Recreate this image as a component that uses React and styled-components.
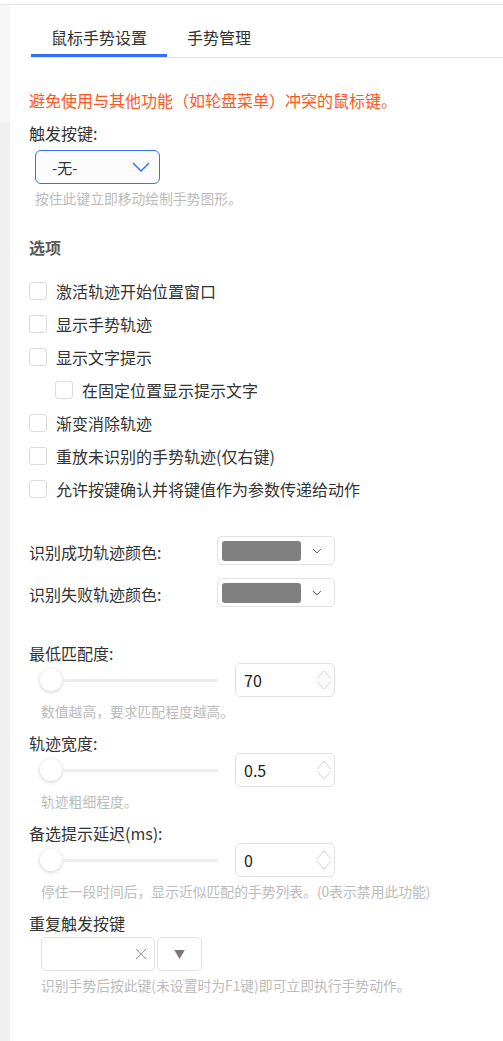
import React, { useState } from 'react';
import styled, { createGlobalStyle } from 'styled-components';

const GlobalStyle = createGlobalStyle`
  html, body {
    margin: 0;
    padding: 0;
    background: #fff;
  }
  body {
    font-family: "Noto Sans CJK SC", "Noto Sans", sans-serif;
    color: #333;
  }
`;

const Page = styled.div`
  height: 1041px;
  display: flex;
  flex-direction: column;
  padding-top: 4px;
  box-sizing: border-box;
`;

const Frame = styled.div`
  flex: 1;
  display: flex;
  border-top: 1px solid #e6e6e6;
`;

const Strip = styled.div`
  width: 10px;
  flex-shrink: 0;
  display: flex;
  flex-direction: column;
  background: #efefef;

  &::before {
    content: '';
    height: 117px;
    background: #f7f7f7;
  }
`;

const Main = styled.div`
  flex: 1;
  padding-left: 19px;
`;

const TabBar = styled.div`
  display: flex;
  border-bottom: 1px solid #e4e4e4;
`;

const Tab = styled.div`
  padding: 20px 20px 5px;
  margin-left: ${p => (p.$first ? '2px' : '0')};
  font-size: 16px;
  line-height: 24px;
  color: #333;
  border-bottom: 3px solid ${p => (p.$active ? '#3370ff' : 'transparent')};
  cursor: pointer;
`;

const Warning = styled.div`
  margin-top: 30px;
  font-size: 16px;
  line-height: 24px;
  color: #ff5722;
`;

const FieldLabel = styled.div`
  margin-top: ${p => p.$top || 0}px;
  font-size: 16px;
  line-height: ${p => p.$lh || 20}px;
  color: #333;
`;

const Help = styled.div`
  margin: 4px 0 0 ${p => p.$indent || 12}px;
  font-size: 13.8px;
  line-height: 20px;
  color: #bbb;
`;

const Select = styled.div`
  margin: 5px 0 0 6px;
  width: 125px;
  height: 34px;
  box-sizing: border-box;
  border: 1px solid #3370ff;
  border-radius: 6px;
  background: #fcfcfc;
  display: flex;
  align-items: center;
  justify-content: space-between;
  padding: 0 9px 0 16px;
  font-size: 15px;
  color: #333;
`;

const Section = styled.div`
  margin-top: 27px;
  font-size: 16px;
  line-height: 24px;
  font-weight: bold;
  color: #5a5a5a;
`;

const Options = styled.div`
  margin-top: 15px;
`;

const CheckRow = styled.label`
  height: 33px;
  display: flex;
  align-items: center;
  gap: 9px;
  padding-left: ${p => (p.$nested ? 26 : 0)}px;
  font-size: 16px;
  color: #333;
  cursor: pointer;
`;

const Box = styled.span`
  width: 18px;
  height: 18px;
  box-sizing: border-box;
  border: 1px solid #dcdcdc;
  border-radius: 3px;
  background: ${p => (p.$on ? '#3370ff' : '#fff')};
`;

const ColorRows = styled.div`
  margin-top: 31px;
  display: flex;
  flex-direction: column;
  gap: 13px;
`;

const ColorRow = styled.div`
  display: flex;
  align-items: center;
`;

const ColorLabel = styled.div`
  width: 188px;
  font-size: 16px;
  padding-top: 3px;
  color: #333;
`;

const ColorPicker = styled.div`
  width: 118px;
  height: 29px;
  box-sizing: border-box;
  border: 1px solid #e2e2e2;
  border-radius: 5px;
  display: flex;
  align-items: center;
  padding: 0 12px 0 4px;
  gap: 11px;
`;

const Swatch = styled.span`
  width: 81px;
  height: 20px;
  border-radius: 3px;
  background: ${p => p.$color};
`;

const SliderRow = styled.div`
  display: flex;
  align-items: center;
  height: 34px;
  padding-left: 11px;
`;

const Slider = styled.div`
  width: 178px;
  height: 22px;
  display: flex;
  align-items: center;
`;

const Thumb = styled.span`
  width: 22px;
  height: 22px;
  border-radius: 50%;
  background: #fff;
  box-shadow: 0 1px 4px rgba(0, 0, 0, 0.2);
  flex-shrink: 0;
`;

const Track = styled.span`
  flex: 1;
  height: 3px;
  background: #ededed;
`;

const NumberBox = styled.div`
  margin-left: 17px;
  width: 100px;
  height: 34px;
  box-sizing: border-box;
  border: 1px solid #e2e2e2;
  border-radius: 5px;
  display: flex;
  align-items: center;
  justify-content: space-between;
  padding: 0 2px 0 8px;
  font-size: 16px;
  color: #222;
`;

const KeyRow = styled.div`
  margin: 4px 0 0 12px;
  display: flex;
  gap: 2px;
`;

const KeyInput = styled.div`
  width: 114px;
  height: 34px;
  box-sizing: border-box;
  border: 1px solid #e2e2e2;
  border-radius: 5px;
  display: flex;
  align-items: center;
  justify-content: flex-end;
  padding-right: 7px;
`;

const KeyButton = styled.div`
  width: 45px;
  height: 34px;
  box-sizing: border-box;
  border: 1px solid #e2e2e2;
  border-radius: 5px;
  display: flex;
  align-items: center;
  justify-content: center;
  color: #777;
  font-size: 11px;
`;

const Chevron = ({ w, h, color, sw }) => (
  <svg width={w} height={h} viewBox={`0 0 ${w} ${h}`}>
    <polyline
      points={`1,1 ${w / 2},${h - 1} ${w - 1},1`}
      fill="none"
      stroke={color}
      strokeWidth={sw}
    />
  </svg>
);

const Spinner = () => (
  <svg width="16" height="26" viewBox="0 0 16 26">
    <polyline points="1,12 8,4 15,12" fill="none" stroke="#d4d4d4" strokeWidth="1" />
    <polyline points="1,14 8,22 15,14" fill="none" stroke="#d4d4d4" strokeWidth="1" />
  </svg>
);

const Cross = () => (
  <svg width="12" height="12" viewBox="0 0 12 12">
    <path d="M1 1 L11 11 M11 1 L1 11" stroke="#999" strokeWidth="1" />
  </svg>
);

const options = [
  { text: '激活轨迹开始位置窗口' },
  { text: '显示手势轨迹' },
  { text: '显示文字提示' },
  { text: '在固定位置显示提示文字', nested: true },
  { text: '渐变消除轨迹' },
  { text: '重放未识别的手势轨迹(仅右键)' },
  { text: '允许按键确认并将键值作为参数传递给动作' },
];

const sliders = [
  { label: '最低匹配度:', value: '70', help: '数值越高，要求匹配程度越高。', top: 36 },
  { label: '轨迹宽度:', value: '0.5', help: '轨迹粗细程度。', top: 12 },
  { label: '备选提示延迟(ms):', value: '0', help: '停住一段时间后，显示近似匹配的手势列表。(0表示禁用此功能)', top: 12 },
];

const App = () => {
  const [tab, setTab] = useState(0);
  const [checked, setChecked] = useState({});

  return (
    <Page>
      <GlobalStyle />
      <Frame>
        <Strip />
        <Main>
          <TabBar>
            <Tab $first $active={tab === 0} onClick={() => setTab(0)}>鼠标手势设置</Tab>
            <Tab $active={tab === 1} onClick={() => setTab(1)}>手势管理</Tab>
          </TabBar>

          <Warning>避免使用与其他功能（如轮盘菜单）冲突的鼠标键。</Warning>

          <FieldLabel $top={9} $lh={24}>触发按键:</FieldLabel>
          <Select>
            <span>-无-</span>
            <Chevron w={18} h={10} color="#3370ff" sw={1.5} />
          </Select>
          <Help $indent={6}>按住此键立即移动绘制手势图形。</Help>

          <Section>选项</Section>
          <Options>
            {options.map((o, i) => (
              <CheckRow
                key={o.text}
                $nested={o.nested}
                onClick={() => setChecked({ ...checked, [i]: !checked[i] })}
              >
                <Box $on={checked[i]} />
                {o.text}
              </CheckRow>
            ))}
          </Options>

          <ColorRows>
            <ColorRow>
              <ColorLabel>识别成功轨迹颜色:</ColorLabel>
              <ColorPicker>
                <Swatch $color="#808080" />
                <Chevron w={10} h={6} color="#555" sw={1} />
              </ColorPicker>
            </ColorRow>
            <ColorRow>
              <ColorLabel>识别失败轨迹颜色:</ColorLabel>
              <ColorPicker>
                <Swatch $color="#808080" />
                <Chevron w={10} h={6} color="#555" sw={1} />
              </ColorPicker>
            </ColorRow>
          </ColorRows>

          {sliders.map(s => (
            <div key={s.label}>
              <FieldLabel $top={s.top}>{s.label}</FieldLabel>
              <SliderRow>
                <Slider>
                  <Thumb />
                  <Track />
                </Slider>
                <NumberBox>
                  <span>{s.value}</span>
                  <Spinner />
                </NumberBox>
              </SliderRow>
              <Help>{s.help}</Help>
            </div>
          ))}

          <FieldLabel $top={12}>重复触发按键</FieldLabel>
          <KeyRow>
            <KeyInput>
              <Cross />
            </KeyInput>
            <KeyButton>▼</KeyButton>
          </KeyRow>
          <Help>识别手势后按此键(未设置时为F1键)即可立即执行手势动作。</Help>
        </Main>
      </Frame>
    </Page>
  );
};

export default App;
